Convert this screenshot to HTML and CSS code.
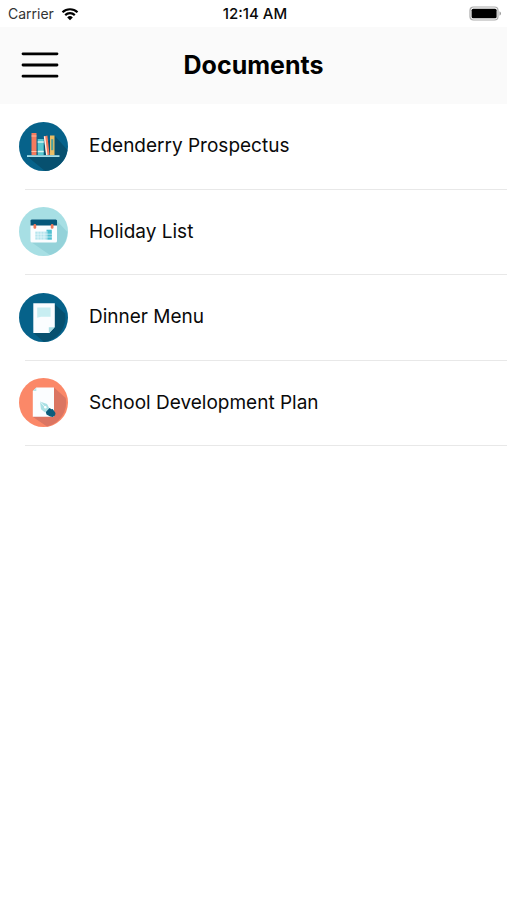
FILE: index.html
```html
<!DOCTYPE html>
<html lang="en">
<head>
<meta charset="utf-8">
<meta name="viewport" content="width=device-width, initial-scale=1">
<title>Documents</title>
<link rel="stylesheet" href="styles.css">
</head>
<body>
<div class="status-bar">
  <div class="carrier">
    <span>Carrier</span>
    <svg class="wifi" viewBox="0 0 18 14" aria-hidden="true">
      <path d="M1.5 5.2a11 11 0 0 1 15 0M4.2 8.1a7 7 0 0 1 9.6 0" fill="none" stroke="#000" stroke-width="2.2"/>
      <path d="M9 13.2 6.2 10.4a4 4 0 0 1 5.6 0z"/>
    </svg>
  </div>
  <time class="clock">12:14 AM</time>
  <svg class="battery" viewBox="0 0 33 15" aria-hidden="true">
    <rect x="1" y="1" width="28" height="13" rx="3.5" fill="#fff" stroke="#aaa" stroke-width="1.2"/>
    <rect x="2.6" y="2.8" width="25" height="9.4" rx="1.5"/>
    <path d="M30.5 5.3c2 .8 2 3.6 0 4.4z" fill="#999"/>
  </svg>
</div>
<header class="nav-bar">
  <button class="menu-button" type="button" aria-label="Menu">
    <svg viewBox="0 0 38 28" aria-hidden="true">
      <path d="M2 2.8h34M2 14h34M2 25.2h34" stroke="#000" stroke-width="2.8" stroke-linecap="round"/>
    </svg>
  </button>
  <h1 class="title">Documents</h1>
</header>
<main>
  <ul class="documents">
    <li class="document">
      <a class="document-link" href="#prospectus">
        <svg class="icon" viewBox="0 0 49 49" aria-hidden="true">
          <circle cx="24.5" cy="24.5" r="24.5" fill="#06628a"/>
          <path d="M36 14 48.4 28A24.5 24.5 0 0 1 26 49L9 35z" fill="#07506f"/>
          <rect x="12.5" y="11" width="5" height="22.3" fill="#f47b5e"/>
          <path d="M12.5 14h5M12.5 29.5h5" stroke="#ffc0a4"/>
          <rect x="18.7" y="17" width="6" height="16.3" fill="#58c6cf"/>
          <path d="M18.7 20h6M18.7 29.5h6" stroke="#d4f4f3" stroke-width="1.5"/>
          <path d="m24.8 14.4 3.6-.9 2.2 19.2-3.4.6z" fill="#f47b5e"/>
          <path d="m24.8 14.4 1.4-.3 2.3 19.1-1.3.1z" fill="#fff0e9"/>
          <rect x="31" y="13.5" width="4.5" height="19.8" fill="#e9bd65"/>
          <path d="M32.2 17.2h2v11h-2z" fill="#49a0a0"/>
          <rect x="8" y="33.2" width="32.5" height="1.8" fill="#a5deea"/>
        </svg>
        <span>Edenderry Prospectus</span>
      </a>
    </li>
    <li class="document">
      <a class="document-link" href="#holidays">
        <svg class="icon" viewBox="0 0 49 49" aria-hidden="true">
          <circle cx="24.5" cy="24.5" r="24.5" fill="#a7dfe4"/>
          <path d="M38 14 48.3 25A24.5 24.5 0 0 1 31 48L12 35z" fill="#94d2d9"/>
          <rect x="11.5" y="14" width="26.5" height="21.5" rx="1.5" fill="#fbfdff"/>
          <path d="M11.5 18.6V13.3l1.2-.8h24.1l1.2.8v5.3z" fill="#06577a"/>
          <rect x="14.5" y="17" width="2.7" height="4.7" rx="1.2" fill="#ee7a5c"/>
          <rect x="31.8" y="17" width="2.7" height="4.7" rx="1.2" fill="#ee7a5c"/>
          <path d="M16.3 24.6h16.5v8H16.3z" fill="#b5e4ed"/>
          <path d="M27.5 22.7h5.3v9.9h-5.3z" fill="#50bfd0"/>
          <path d="M16 27.2h17M16 30h17M19 24v9M22 24v9M25 24v9M28 24v9" stroke="#f2fcff" stroke-width=".6"/>
        </svg>
        <span>Holiday List</span>
      </a>
    </li>
    <li class="document">
      <a class="document-link" href="#dinner">
        <svg class="icon" viewBox="0 0 49 49" aria-hidden="true">
          <circle cx="24.5" cy="24.5" r="24.5" fill="#06628a"/>
          <path d="M35.5 11 46 20.5A24.5 24.5 0 0 1 25 49L14 39.5z" fill="#07506f"/>
          <path d="M14.3 10.3h21.5v23.6l-5.5 6H14.3z" fill="#fbfdff"/>
          <path d="M18.2 14.5h13.4v9.3H22l-3.8 1z" fill="#c8eef2"/>
          <path d="M29.8 34.2h6l-6 5.7z" fill="#a8dde4"/>
        </svg>
        <span>Dinner Menu</span>
      </a>
    </li>
    <li class="document">
      <a class="document-link" href="#development">
        <svg class="icon" viewBox="0 0 49 49" aria-hidden="true">
          <circle cx="24.5" cy="24.5" r="24.5" fill="#fb8868"/>
          <path d="M35 9.5 46.7 20A24.5 24.5 0 0 1 28 48.5L14 39z" fill="#db7562"/>
          <path d="M17.3 9.5H35v29.2H13.8V13z" fill="#fbfdff"/>
          <path d="M17.3 9.5V13h-3.5z" fill="#b9e5e7"/>
          <path d="m21 23.5 7 2.4 2.3 4.3-4.2 4.2-4.1-3.2z" fill="#a9e0e4"/>
          <path d="m21 23.5 5 5.6" stroke="#fff" stroke-width=".7"/>
          <circle cx="26.3" cy="29.2" r="1.2" fill="#fff"/>
          <path d="m26.8 33.9 3.7-3.8 2.1 1.2 1.1-.3 2.8 4-.4 2.3-2.2 1.7-2.7-.4-3.7-2.2z" fill="#0a5d7c"/>
        </svg>
        <span>School Development Plan</span>
      </a>
    </li>
  </ul>
</main>
</body>
</html>
```
FILE: styles.css
```css
* {
  box-sizing: border-box;
}

body {
  margin: 0;
  background: #fff;
  color: #0a0a0a;
  font-family: Inter, "Liberation Sans", sans-serif;
}

.status-bar {
  display: grid;
  grid-template-columns: 1fr auto 1fr;
  align-items: center;
  height: 27px;
  padding: 0 5px 0 8px;
  font-size: 14px;
  line-height: 20px;
}

.carrier {
  display: flex;
  align-items: center;
  gap: 7px;
  color: #333;
}

.wifi {
  width: 18px;
  height: 14px;
}

.clock {
  font-size: 15px;
  font-weight: 500;
}

.battery {
  justify-self: end;
  width: 33px;
  height: 15px;
}

.nav-bar {
  display: grid;
  grid-template-columns: 1fr auto 1fr;
  align-items: center;
  height: 77px;
  padding: 0 21px 2px;
  background: #fafafa;
}

.menu-button {
  justify-self: start;
  display: flex;
  padding: 0;
  border: 0;
  background: none;
  cursor: pointer;
}

.menu-button svg {
  width: 38px;
  height: 28px;
}

.title {
  margin: 0;
  color: #000;
  font-size: 25px;
  font-weight: 700;
  line-height: 32px;
}

.documents {
  display: grid;
  grid-template-rows: repeat(4, 1fr);
  min-height: 342px;
  margin: 0;
  padding: 0 0 0 25px;
  list-style: none;
}

.document {
  display: flex;
  border-bottom: 1px solid #e8e8e8;
}

.document-link {
  flex: 1;
  display: flex;
  align-items: center;
  gap: 21px;
  margin-left: -6px;
  color: inherit;
  font-size: 19px;
  line-height: 24px;
  text-decoration: none;
}

.icon {
  flex: none;
  width: 49px;
  height: 49px;
}
```
